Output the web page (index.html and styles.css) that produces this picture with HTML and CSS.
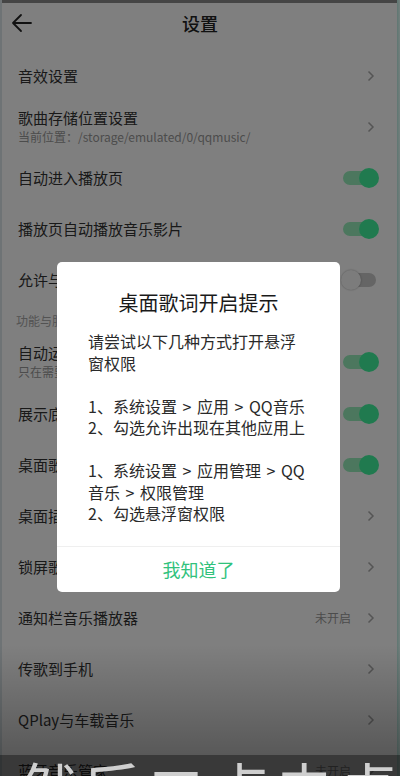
FILE: index.html
```html
<!DOCTYPE html>
<html lang="zh-CN">
<head>
<meta charset="utf-8">
<title>设置</title>
<link rel="stylesheet" href="styles.css">
</head>
<body>
<div class="screen">
  <div class="status-strip"></div>
  <header class="topbar">
    <svg class="back" width="22" height="20" viewBox="0 0 22 20"><path d="M20 10H2M10 2L2 10l8 8" fill="none" stroke="#222" stroke-width="1.8" stroke-linecap="round" stroke-linejoin="round"/></svg>
    <h1 class="title">设置</h1>
  </header>

  <div class="list">
    <div class="row"><span class="label">音效设置</span><svg class="chev" width="8" height="12" viewBox="0 0 8 12"><path d="M1.5 1.5L6 6l-4.5 4.5" fill="none" stroke="#aaa" stroke-width="1.5"/></svg></div>
    <div class="row"><div class="texts"><span class="label">歌曲存储位置设置</span><span class="sub">当前位置：/storage/emulated/0/qqmusic/</span></div><svg class="chev" width="8" height="12" viewBox="0 0 8 12"><path d="M1.5 1.5L6 6l-4.5 4.5" fill="none" stroke="#aaa" stroke-width="1.5"/></svg></div>
    <div class="row"><span class="label">自动进入播放页</span><span class="toggle on"><span class="track"></span><span class="thumb"></span></span></div>
    <div class="row"><span class="label">播放页自动播放音乐影片</span><span class="toggle on"><span class="track"></span><span class="thumb"></span></span></div>
    <div class="row"><span class="label">允许与其他应用同时播放</span><span class="toggle"><span class="track"></span><span class="thumb"></span></span></div>
    <div class="section">功能与服务</div>
    <div class="row tall"><div class="texts"><span class="label">自动运行QQ音乐</span><span class="sub">只在需要时自动运行</span></div><span class="toggle on"><span class="track"></span><span class="thumb"></span></span></div>
    <div class="row"><span class="label">展示底部播放条</span><span class="toggle on"><span class="track"></span><span class="thumb"></span></span></div>
    <div class="row"><span class="label">桌面歌词</span><span class="toggle on"><span class="track"></span><span class="thumb"></span></span></div>
    <div class="row"><span class="label">桌面插件</span><svg class="chev" width="8" height="12" viewBox="0 0 8 12"><path d="M1.5 1.5L6 6l-4.5 4.5" fill="none" stroke="#aaa" stroke-width="1.5"/></svg></div>
    <div class="row"><span class="label">锁屏歌词</span><svg class="chev" width="8" height="12" viewBox="0 0 8 12"><path d="M1.5 1.5L6 6l-4.5 4.5" fill="none" stroke="#aaa" stroke-width="1.5"/></svg></div>
    <div class="row"><span class="label">通知栏音乐播放器</span><span class="value">未开启</span><svg class="chev" width="8" height="12" viewBox="0 0 8 12"><path d="M1.5 1.5L6 6l-4.5 4.5" fill="none" stroke="#aaa" stroke-width="1.5"/></svg></div>
    <div class="row"><span class="label">传歌到手机</span><svg class="chev" width="8" height="12" viewBox="0 0 8 12"><path d="M1.5 1.5L6 6l-4.5 4.5" fill="none" stroke="#aaa" stroke-width="1.5"/></svg></div>
    <div class="row"><span class="label">QPlay与车载音乐</span><svg class="chev" width="8" height="12" viewBox="0 0 8 12"><path d="M1.5 1.5L6 6l-4.5 4.5" fill="none" stroke="#aaa" stroke-width="1.5"/></svg></div>
    <div class="row"><span class="label">蓝牙音乐管家</span><span class="value">未开启</span><svg class="chev" width="8" height="12" viewBox="0 0 8 12"><path d="M1.5 1.5L6 6l-4.5 4.5" fill="none" stroke="#aaa" stroke-width="1.5"/></svg></div>
  </div>

  <div class="edge-left"></div>
  <div class="edge-right"></div>
  <div class="scrim"></div>

  <div class="dialog">
    <div class="dialog-body">
      <h2 class="dialog-title">桌面歌词开启提示</h2>
      <p class="dialog-text">请尝试以下几种方式打开悬浮窗权限</p>
      <p class="dialog-text">1、系统设置 &gt; 应用 &gt; QQ音乐<br>2、勾选允许出现在其他应用上</p>
      <p class="dialog-text">1、系统设置 &gt; 应用管理 &gt; QQ音乐 &gt; 权限管理<br>2、勾选悬浮窗权限</p>
    </div>
    <div class="dialog-btn">我知道了</div>
  </div>

  <div class="fade"></div>
  <div class="caption">然后二点击桌面歌词</div>
</div>
</body>
</html>
```

FILE: styles.css
```css
* { box-sizing: border-box; margin: 0; padding: 0; }
html, body { width: 400px; height: 776px; overflow: hidden; }
body {
  background: #fff;
  font-family: "Noto Sans CJK SC", "Noto Sans", sans-serif;
  color: #333;
}
.screen { position: relative; width: 400px; height: 776px; overflow: hidden; background: #fff; }

.status-strip { height: 3px; background: #8a8a8a; }
.topbar {
  height: 47px;
  display: flex;
  align-items: center;
  justify-content: center;
  position: relative;
}
.back { position: absolute; left: 11px; top: 10px; }
.title { font-size: 18px; font-weight: 500; color: #222; line-height: 1; margin-top: -8px; }

.list { display: flex; flex-direction: column; }
.row {
  height: 51px;
  display: flex;
  align-items: center;
  padding: 0 25px 0 18px;
  font-size: 15px;
  color: #333;
}
.row.tall { height: 52px; }
.texts { display: flex; flex-direction: column; flex: 1; }
.texts .label { line-height: 20px; }
.label { flex: 1; line-height: 20px; }
.sub { font-size: 12px; color: #999; line-height: 18px; margin-top: 0px; }
.value { font-size: 12px; color: #999; margin-right: 16px; }
.chev { flex: none; }
.section {
  height: 31px;
  padding: 8px 0 0 16px;
  font-size: 12px;
  color: #a6a6a6;
  line-height: 16px;
}

.toggle { position: relative; flex: none; width: 38px; height: 20px; margin-right: -4px; }
.toggle .track {
  position: absolute; left: 2px; right: 3px; top: 3px; bottom: 3px;
  border-radius: 7px; background: #cacaca;
}
.toggle .thumb {
  position: absolute; top: 0; left: 0; width: 20px; height: 20px; border-radius: 50%;
  background: #f8f8f8; box-shadow: 0 0 2px rgba(0,0,0,0.35);
}
.toggle.on .track { background: #98eebc; }
.toggle.on .thumb { left: 18px; background: #40f59e; box-shadow: none; }

.edge-left { position: absolute; left: 0; top: 0; bottom: 0; width: 2px; background: #dde6ea; }
.edge-right { position: absolute; right: 0; top: 0; bottom: 0; width: 3px; background: linear-gradient(90deg, #bfeee4, #e6fffb); }

.scrim { position: absolute; inset: 0; background: rgba(0,0,0,0.5); }

.dialog {
  position: absolute; left: 57px; top: 262px; width: 283px;
  background: #fff; border-radius: 5px; overflow: hidden;
}
.dialog-body { padding: 27px 31px 21px; }
.dialog-title {
  font-size: 20px; font-weight: 400; color: #1a1a1a; text-align: center;
  line-height: 28px; margin-bottom: 14px;
}
.dialog-text { font-size: 16px; line-height: 21.5px; color: #2a2a2a; word-spacing: 2px; }
.dialog-text + .dialog-text { margin-top: 21.5px; }
.dialog-btn {
  height: 46px; border-top: 1px solid #efefef;
  display: flex; align-items: center; justify-content: center;
  font-size: 18px; color: #31c27c;
}

.fade {
  position: absolute; left: 0; right: 0; bottom: 21px; height: 110px;
  background: linear-gradient(rgba(0,0,0,0), rgba(0,0,0,0.3));
}
.caption {
  position: absolute; left: 0; right: 0; bottom: 0; height: 21px;
  background: rgba(0,0,0,0.55);
  overflow: hidden;
  font-size: 60px; line-height: 60px; letter-spacing: 4px;
  color: #cfcfcf; padding: 3px 0 0 18px; white-space: nowrap;
}
```
